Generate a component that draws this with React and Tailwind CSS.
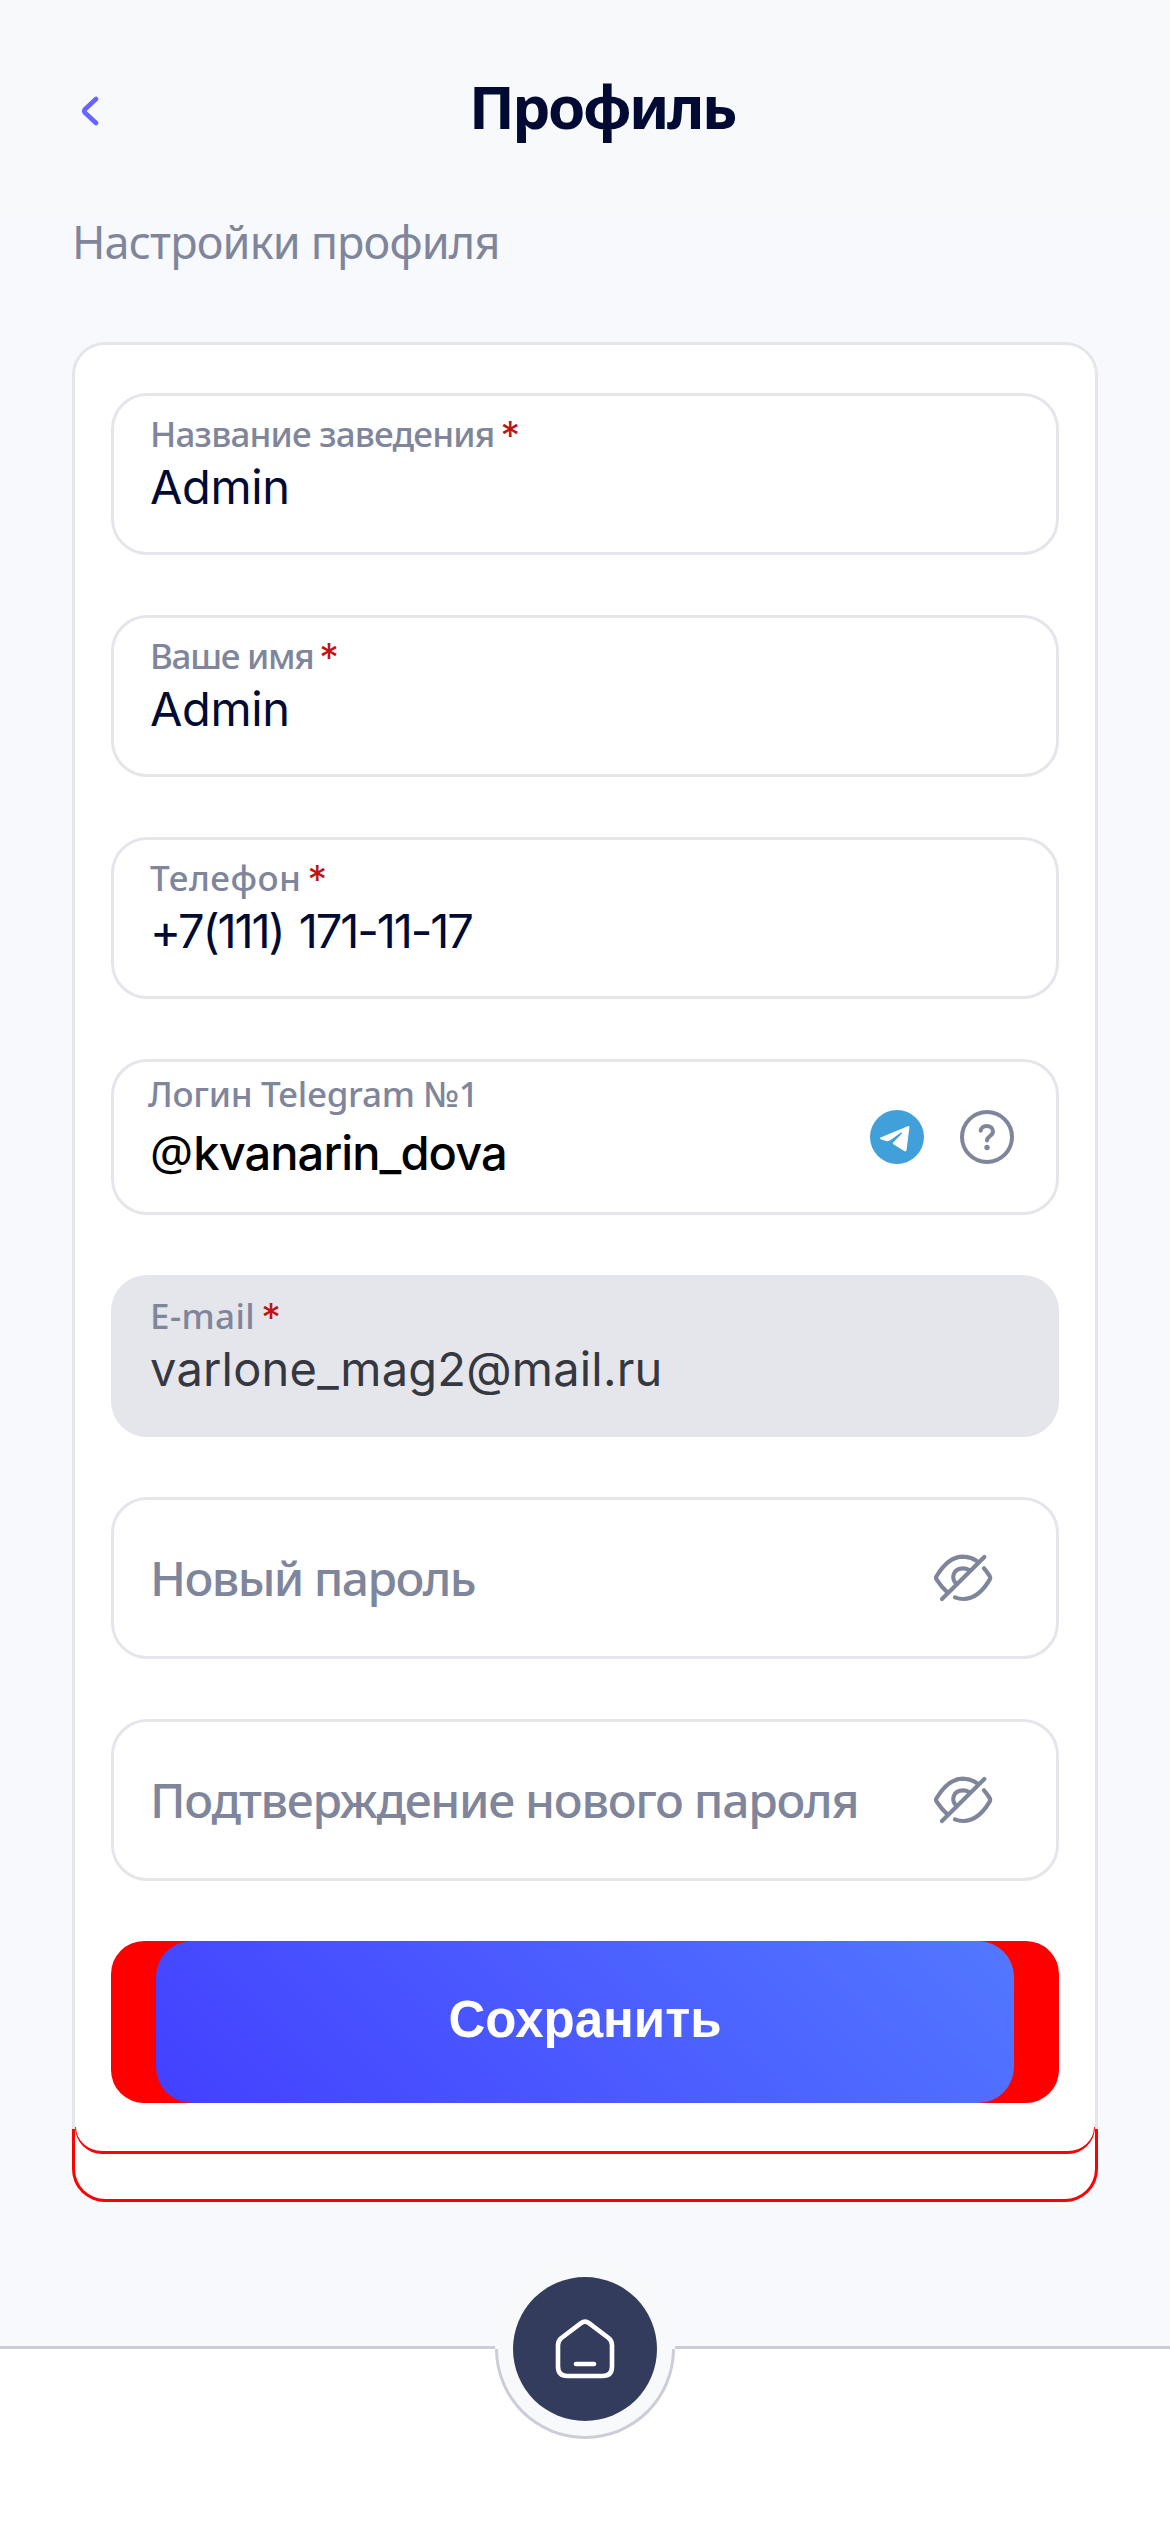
import React from 'react';

function ChevronLeft() {
  return (
    <svg className="h-[30px] w-[18px]" viewBox="0 0 18 30" fill="none" stroke="#6764ff" strokeWidth="4.6" strokeLinecap="round" strokeLinejoin="round">
      <path d="M15 3 4 13.2Q2.4 15 4 16.8L15 27" />
    </svg>
  );
}

function TelegramIcon() {
  return (
    <svg className="size-[54px]" viewBox="0 0 54 54">
      <circle cx="27" cy="27" r="27" fill="#419fd9" />
      <path
        fill="#fff"
        d="M10.5 27.6 37.8 16.2Q39.7 15.5 39.4 17.6L36.6 39.8Q36.2 42.2 34.2 41L23.4 34.2Q22.2 33.4 23.2 32.4L31.9 23.4Q32.3 22.2 31 22.6L20.6 30Q18.4 31.6 16 31L10.7 29.2Q9.3 28.4 10.5 27.6Z"
      />
    </svg>
  );
}

function HelpIcon() {
  return (
    <svg className="size-[54px]" viewBox="0 0 54 54" fill="none" stroke="#7f869b" strokeWidth="4" strokeLinecap="round" strokeLinejoin="round">
      <circle cx="27" cy="27" r="25" />
      <path d="M20.7 20.8C21 18 23.3 16 26.7 16 30.3 16 33 18.3 33 21.6 33 26.2 27 26 27 30.4" />
      <circle cx="27" cy="37.5" r="2.7" fill="#7f869b" stroke="none" />
    </svg>
  );
}

function EyeOffIcon() {
  return (
    <svg className="h-[50px] w-[60px]" viewBox="159 219 180 150" fill="none" stroke="#7f869b" strokeWidth="12.5" strokeLinecap="round" strokeLinejoin="round">
      <path d="M203 338Q184 321 170 299Q166 293 170 288C190 255 217 230 249 230Q275 231 293 245" />
      <path d="M186 357 313 231" />
      <path d="M229 312C211 292 221 265 249 265Q259 265 267 270" />
      <path d="M312 265Q320 274 329 288Q332 293 329 299C310 331 283 357 250 357Q237 357 225 352" />
    </svg>
  );
}

function HomeIcon() {
  return (
    <svg className="size-[60px]" viewBox="0 0 60 60" fill="none" stroke="#fff" strokeWidth="4.6" strokeLinecap="round" strokeLinejoin="round">
      <path d="M26 4.2Q30 1.2 34 4.2L53.6 19Q57 21.8 57 26V47.5Q57 57 47.5 57H12.5Q3 57 3 47.5V26Q3 21.8 6.4 19Z" />
      <path d="M21 45H39" />
    </svg>
  );
}

function Label({ children, required, tracking = 'tracking-[-0.8px]' }) {
  return (
    <div className="flex h-[44px] items-baseline font-['Noto_Sans',sans-serif] text-[35px] leading-[44px] font-medium whitespace-nowrap text-[#7f869b]">
      <span className={tracking}>{children}</span>
      {required && <span className="mt-[2px] ml-[6px] self-start font-['Inter',sans-serif] text-[39px] leading-[44px] font-normal text-[#c01414]">*</span>}
    </div>
  );
}

function Field({ label, tracking, disabled, children }) {
  return (
    <div className={`h-[162px] rounded-[36px] border-[3px] border-[#e5e6eb] pt-[16px] pl-[36px] ${disabled ? 'bg-[#e5e6eb] text-[#353840]' : 'bg-white text-[#000a33]'}`}>
      <Label required tracking={tracking}>{label}</Label>
      <div className="mt-[2px] font-['Inter',sans-serif] text-[47px] leading-[57px] font-normal whitespace-nowrap">{children}</div>
    </div>
  );
}

function PasswordField({ children, tracking }) {
  return (
    <div className="flex h-[162px] items-center justify-between rounded-[36px] border-[3px] border-[#e5e6eb] bg-white pr-[63px] pl-[36px]">
      <span className={`font-['Noto_Sans',sans-serif] text-[48px] leading-[66px] font-medium whitespace-nowrap text-[#7f869b] ${tracking}`}>{children}</span>
      <EyeOffIcon />
    </div>
  );
}

export default function App() {
  return (
    <div className="flex h-[2532px] w-[1170px] flex-col overflow-hidden bg-[#f8f9fd]">
      <header className="flex h-[211px] shrink-0 items-center bg-[#f7f9fb] pl-[81px]">
        <button aria-label="Назад" className="mt-[10px]">
          <ChevronLeft />
        </button>
        <h1 className="mt-px ml-[370px] font-['Noto_Sans',sans-serif] text-[60px] leading-[82px] font-bold tracking-[-2.4px] text-[#000a33]">Профиль</h1>
      </header>

      <main className="px-[72px]">
        <p className="pt-px font-['Noto_Sans',sans-serif] text-[45px] leading-[60px] tracking-[-0.85px] text-[#7f869b]">Настройки профиля</p>

        <form className="relative mt-[70px] flex h-[1860px] flex-col gap-[60px] rounded-[33px] border-[3px] border-[#e5e6eb] bg-white px-9 pt-12">
          <Field label="Название заведения">
            <span className="tracking-[-0.4px]">Admin</span>
          </Field>
          <Field label="Ваше имя" tracking="tracking-[-1.3px]">
            <span className="tracking-[-0.4px]">Admin</span>
          </Field>
          <Field label="Телефон" tracking="tracking-[0.5px]">
            <span className="[word-spacing:4px] tracking-[-2.1px]">+7(111) 171-11-17</span>
          </Field>

          <div className="flex h-[156px] justify-between rounded-[36px] border-[3px] border-[#e5e6eb] pt-[10px] pr-[42px] pl-[34px]">
            <div>
              <Label tracking="tracking-[-0.3px]">Логин Telegram №1</Label>
              <div className="mt-[7px] ml-[2px] flex items-baseline leading-[57px] text-black">
                <span className="font-['Noto_Sans',sans-serif] text-[48px] leading-[57px]">@</span>
                <span className="font-['Inter',sans-serif] text-[47px] leading-[57px] font-medium tracking-[-0.9px]">kvanarin_dova</span>
              </div>
            </div>
            <div className="mt-[38px] flex gap-9">
              <TelegramIcon />
              <HelpIcon />
            </div>
          </div>

          <Field label="E-mail" tracking="tracking-[0.4px]" disabled>
            <span className="tracking-[0.2px]">varlone_mag2@mail.ru</span>
          </Field>
          <PasswordField tracking="tracking-[-1.6px]">Новый пароль</PasswordField>
          <PasswordField tracking="tracking-[-1.3px]">Подтверждение нового пароля</PasswordField>

          <div className="h-[162px] rounded-[33px] bg-[#ff0000] px-[45px]">
            <button type="button" className="flex h-full w-full items-center justify-center rounded-[36px] bg-[linear-gradient(45deg,#4340ff,#5278ff)] pb-[4px] font-['Liberation_Sans',sans-serif] text-[51px] font-bold text-white">
              Сохранить
            </button>
          </div>

          <div className="absolute -inset-x-[3px] -bottom-[3px] h-[73px] rounded-b-[33px] border-x-[3px] border-b-[3px] border-[#ff0000]" />
          <div className="absolute inset-x-0 bottom-[45px] h-[27px] rounded-b-[27px] border-x border-b-[3px] border-[#ff0000]" />
        </form>
      </main>

      <nav className="relative mt-[144px] flex-1 border-t-[3px] border-[#cccdd9] bg-white">
        <div className="absolute -top-[90px] left-[495px] flex size-[180px] items-center justify-center">
          <div className="absolute inset-x-0 top-0 h-[90px] rounded-t-full bg-[#f7f9fb]" />
          <div className="absolute inset-x-0 bottom-0 h-[90px] rounded-b-full border-[3px] border-t-0 border-[#cccdd9] bg-[#f7f9fb]" />
          <button aria-label="Главная" className="relative flex size-36 items-center justify-center rounded-full bg-[#343c5e]">
            <HomeIcon />
          </button>
        </div>
      </nav>
    </div>
  );
}
